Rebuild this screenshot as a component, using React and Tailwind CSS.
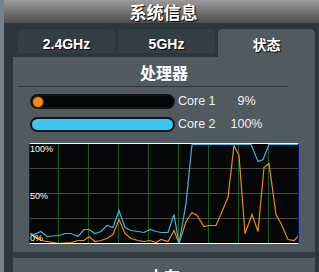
const cyan = [
  [0, 89], [4, 90], [11, 87], [17, 92], [29, 91], [35, 89], [41, 89], [48, 92], [54, 85], [59, 85],
  [65, 89], [71, 87], [77, 81], [83, 83], [89, 66], [95, 83], [101, 86], [108, 87], [114, 88], [120, 85],
  [126, 87], [131, 88], [138, 88], [144, 70], [149, 99], [156, 59], [162, 0], [221, 0], [228, 17],
  [233, 15], [239, 0], [270, 0],
];

const orange = [
  [0, 89], [11, 96], [29, 99], [41, 98], [48, 96], [54, 96], [59, 92], [65, 97], [71, 96], [77, 94],
  [83, 90], [89, 75], [95, 89], [101, 94], [108, 96], [114, 97], [120, 96], [126, 98], [131, 95],
  [138, 97], [144, 86], [149, 99], [156, 77], [162, 68], [167, 71], [174, 82], [179, 81], [186, 81],
  [192, 67], [198, 53], [204, 1], [209, 11], [215, 89], [222, 70], [228, 87], [234, 23], [239, 19],
  [246, 70], [251, 79], [258, 95], [264, 96], [269, 91],
];

const toPoints = (pts) => pts.map(([x, y]) => `${x},${y + 0.5}`).join(' ');

function Tab({ label, active }) {
  return (
    <div
      className={`w-[97px] rounded-t-[5px] flex items-start justify-center pt-[5px] text-[14px] font-bold text-white [text-shadow:1px_1px_1px_#000] ${
        active ? 'h-[28px] bg-[#515b5f]' : 'h-[24px] bg-[#343f44]'
      }`}
    >
      {label}
    </div>
  );
}

function CoreBar({ name, pct, full }) {
  return (
    <div className="flex items-center h-[15px]">
      <div
        className={`w-[145px] h-[15px] rounded-full border-2 border-[#141414] flex items-center ${
          full ? 'bg-[#3cc6f4]' : 'bg-[#060807]'
        }`}
      >
        {!full && <div className="w-[12px] h-[12px] rounded-full bg-[#f28c0a] border border-[#3a2400]" />}
      </div>
      <span className="ml-[3px] w-[52px] text-[12.5px] text-[#eef0f0]">{name}</span>
      <span className="w-[33px] text-center text-[12.5px] text-[#eef0f0]">{pct}</span>
    </div>
  );
}

function Chart() {
  return (
    <div className="relative w-[270px] h-[101px] bg-[#050807] border-t border-b border-white border-l border-r border-l-[#12127a] border-r-[#12127a]">
      <svg width="268" height="99" className="absolute left-0 top-0">
        {[25, 50, 75].map((y) => (
          <line key={y} x1="0" x2="268" y1={y - 0.5} y2={y - 0.5} stroke="#484848" strokeWidth="1" />
        ))}
        {[28, 58, 88, 118, 148, 178, 208, 238].map((x) => (
          <line key={x} x1={x + 0.5} x2={x + 0.5} y1="0" y2="99" stroke="#1d5a1d" strokeWidth="1" />
        ))}
        <polyline points={toPoints(orange)} fill="none" stroke="#f08c0c" strokeWidth="1.2" />
        <polyline points={toPoints(cyan)} fill="none" stroke="#38b8e2" strokeWidth="1.2" />
      </svg>
      <span className="absolute left-0 top-[1px] text-[9px] leading-[9px] text-white">100%</span>
      <span className="absolute left-0 top-[48px] text-[9px] leading-[9px] text-white">50%</span>
      <span className="absolute left-0 top-[90px] text-[9px] leading-[9px] text-white">0%</span>
    </div>
  );
}

export default function App() {
  return (
    <div className="w-[319px] h-[272px] flex bg-[#2c373b] overflow-hidden font-['Liberation_Sans','Noto_Sans_CJK_SC',sans-serif]">
      <div className="w-[4px] bg-[#76828a]" />
      <div className="flex-1 flex flex-col">
        <div className="h-[23px] bg-gradient-to-b from-[#9c9c9c] to-[#4e4e4e] flex items-center justify-center pl-[4px]">
          <span className="text-[17px] font-bold text-white [text-shadow:1px_1px_1px_#000] font-['Noto_Sans_CJK_SC',sans-serif]">
            系统信息
          </span>
        </div>
        <div className="pl-[9px] pr-[4px]">
          <div className="flex items-start gap-[3px] pl-[5px] mt-[6px] h-[28px]">
            <Tab label="2.4GHz" />
            <Tab label="5GHz" />
            <Tab label={<span className="font-['Noto_Sans_CJK_SC',sans-serif]">状态</span>} active />
          </div>
          <div className="h-[195px] bg-[#515b5f] flex flex-col">
            <div className="h-[29px] flex items-center justify-center">
              <span className="text-[16px] font-bold text-white font-['Noto_Sans_CJK_SC',sans-serif]">处理器</span>
            </div>
            <div className="ml-[5px] w-[270px] h-px bg-[#2f383b]" />
            <div className="ml-[17px] mt-[7px] flex flex-col gap-[8px]">
              <CoreBar name="Core 1" pct="9%" />
              <CoreBar name="Core 2" pct="100%" full />
            </div>
            <div className="ml-[16px] mt-[11px]">
              <Chart />
            </div>
          </div>
          <div className="h-[6px] bg-[#343e42]" />
          <div className="h-[40px] bg-[#515b5f] flex justify-center pt-[6px]">
            <span className="text-[16px] font-bold text-white font-['Noto_Sans_CJK_SC',sans-serif]">内存</span>
          </div>
        </div>
      </div>
    </div>
  );
}
